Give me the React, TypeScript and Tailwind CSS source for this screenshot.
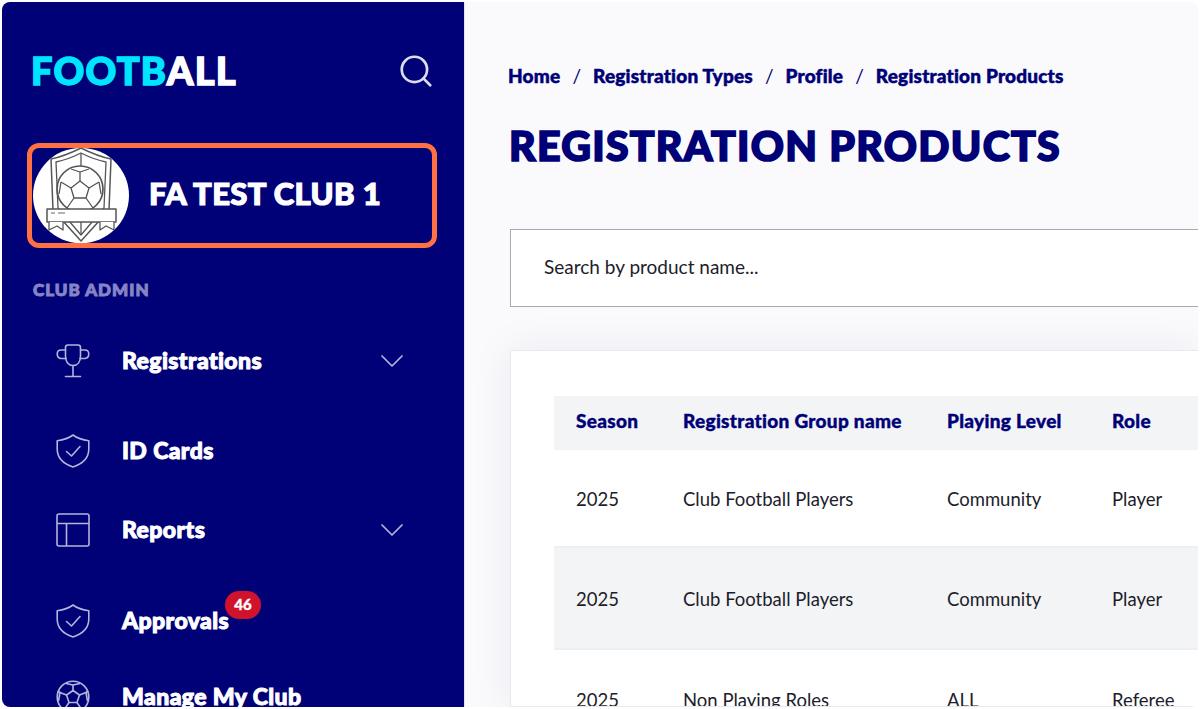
import { ChevronDown, Search } from "lucide-react";
import type { ReactNode } from "react";

function TableIcon() {
  return (
    <svg viewBox="0 0 34 34" className="size-[34px]" fill="none" stroke="#b4b4dc" strokeWidth="1.6">
      <rect x="1" y="1" width="32" height="32" rx="2" />
      <path d="M1 10.5h32M10.5 10.5V33" />
    </svg>
  );
}

function ShieldIcon() {
  return (
    <svg viewBox="0 0 34 34" className="size-[34px]" fill="none" stroke="#b4b4dc" strokeWidth="1.6" strokeLinejoin="round" strokeLinecap="round">
      <path d="M17 1 C21 4 27 6 32.8 6.8 V15 C32.8 24 26 30 17 33 C8 30 1.2 24 1.2 15 V6.8 C7 6 13 4 17 1 Z" />
      <path d="M10.5 17.5 L15.5 22 L24 12.5" />
    </svg>
  );
}

function TrophyIcon() {
  return (
    <svg viewBox="0 0 34 34" className="size-[34px]" fill="none" stroke="#b4b4dc" strokeWidth="1.6" strokeLinejoin="round" strokeLinecap="round">
      <path d="M9.5 3.5 C9.5 2 10.5 1 12 1 H22 C23.5 1 24.5 2 24.5 3.5 V12 C24.5 18 21.5 21.5 17 21.5 C12.5 21.5 9.5 18 9.5 12 Z" />
      <path d="M9.5 6 H5 C0 6 0 14 5 14.5 H10 M24.5 6 H29 C34 6 34 14 29 14.5 H24" />
      <path d="M17 21.5 V32.5 M9.5 32.5 H24.5" />
    </svg>
  );
}

function BallIcon() {
  return (
    <svg viewBox="0 0 34 34" className="size-[34px]" fill="none" stroke="#b4b4dc" strokeWidth="1.6" strokeLinejoin="round">
      <circle cx="17" cy="17" r="15.8" />
      <path d="M17 10.5 L23.5 15 L21 22.5 H13 L10.5 15 Z" />
      <path d="M17 10.5 V5 M23.5 15 L30 12.5 M21 22.5 L25 28.5 M13 22.5 L9 28.5 M10.5 15 L4 12.5" />
      <path d="M10 3.5 L17 5 L24 3.5 M32 11 L30 12.5 L31.5 21 M2 11 L4 12.5 L2.5 21 M9 28.5 L12 32 M25 28.5 L22 32" />
    </svg>
  );
}

function Crest() {
  return (
    <div className="w-24 h-[95px] rounded-full bg-white overflow-hidden shrink-0">
      <svg viewBox="0 0 96 96" className="size-24" fill="none" stroke="#555" strokeWidth="1.3" strokeLinejoin="round">
        <path d="M48 0 C56 4 64 8 78 11 L76 62 L48 93 L20 62 L18 11 C32 8 40 4 48 0 Z" strokeWidth="1.5" />
        <path d="M48 5 C56 9 63 12 73 14 L71 60 L48 87 L25 60 L23 14 C33 12 40 9 48 5 Z" />
        <path d="M48 5 V20 M48 74 V87" />
        <circle cx="47" cy="41" r="23" fill="#fff" strokeWidth="1.7" />
        <path d="M47 33 L56 40 L53 50 H41 L38 40 Z" />
        <path d="M47 33 V24 M56 40 L66 34 M53 50 L60 60 M41 50 L34 60 M38 40 L28 34" />
        <path d="M38 21 L47 24 L56 21 M66 34 L68 46 M28 34 L26 46 M34 60 L41 64 M60 60 L53 64" />
        <path d="M14 61 H83 V74 H14 Z" fill="#fff" strokeWidth="1.5" />
        <path d="M16 74 V82 L24 78 L30 82 V74 M81 74 V82 L73 78 L67 82 V74" fill="#fff" />
        <path d="M18 65 H22 M25 65 H32" strokeWidth="0.9" />
      </svg>
    </div>
  );
}

function NavItem({ icon, label, chevron, badge, className }: { icon: ReactNode; label: string; chevron?: boolean; badge?: string; className: string }) {
  return (
    <div className={`flex items-center pl-[54px] pr-[52px] ${className}`}>
      <span className="w-[66px] shrink-0 flex">{icon}</span>
      <span className="relative mb-[2px] font-black text-[23px] tracking-[0.4px] leading-none text-white [-webkit-text-stroke:1px_currentColor]">
        {label}
        {badge && (
          <span className="absolute -top-[18px] -right-[32px] h-[28px] w-[36px] rounded-full bg-[#d0122d] text-white text-[15px] tracking-normal [-webkit-text-stroke:0.3px_currentColor] flex items-center justify-center">
            {badge}
          </span>
        )}
      </span>
      {chevron && <ChevronDown className="ml-auto text-[#b4b4dc] shrink-0" size={40} strokeWidth={1.05} />}
    </div>
  );
}

function Row({ name, level, role, className }: { name: string; level: string; role: string; className: string }) {
  return (
    <div className={`flex items-center shrink-0 text-[18.5px] text-[#1d1d2b] ${className}`}>
      <span className="w-[129px] pl-[22px]">2025</span>
      <span className="w-[264px]">{name}</span>
      <span className="w-[165px]">{level}</span>
      <span>{role}</span>
    </div>
  );
}

function Crumb({ children }: { children: string }) {
  return <span className="font-black tracking-[0.2px] [-webkit-text-stroke:0.5px_currentColor]">{children}</span>;
}

export default function App() {
  return (
    <div className="h-[709px] w-[1200px] bg-white p-[2px] overflow-hidden font-['Lato',sans-serif]">
      <div className="flex h-full w-full rounded-lg overflow-hidden bg-[#fafafc]">
        <aside className="w-[462px] h-full shrink-0 bg-[#000077] overflow-hidden flex flex-col pt-[46px] pl-[25px] pr-[26px]">
          <div className="flex items-center justify-between pl-[4px] pr-[3px] h-[46px] shrink-0">
            <span className="mb-[2px] font-black text-[38px] tracking-[1.2px] leading-none [-webkit-text-stroke:1.4px_currentColor]">
              <span className="text-[#00e5ff]">FOOTB</span>
              <span className="text-white">ALL</span>
            </span>
            <Search className="text-[#dcdcf0]" size={38} strokeWidth={1.7} />
          </div>
          <div className="mt-[49px] h-[105px] w-[410px] shrink-0 rounded-[12px] border-[5px] border-[#ff7043] pl-[1px] flex items-center">
            <Crest />
            <span className="ml-[20px] mb-[4px] font-black text-[31px] tracking-[0.4px] leading-none text-white [-webkit-text-stroke:1.2px_currentColor]">FA TEST CLUB 1</span>
          </div>
          <div className="mt-[33px] pl-[6px] font-black text-[17px] tracking-[1px] leading-none text-[#8585c4] [-webkit-text-stroke:1px_currentColor]">CLUB ADMIN</div>
          <div className="-ml-[25px] -mr-[26px] flex flex-col">
            <NavItem icon={<TrophyIcon />} label="Registrations" chevron className="mt-[46px] h-[34px] shrink-0" />
            <NavItem icon={<ShieldIcon />} label="ID Cards" className="mt-[56px] h-[34px] shrink-0" />
            <NavItem icon={<TableIcon />} label="Reports" chevron className="mt-[45px] h-[34px] shrink-0" />
            <NavItem icon={<ShieldIcon />} label="Approvals" badge="46" className="mt-[57px] h-[34px] shrink-0" />
            <NavItem icon={<BallIcon />} label="Manage My Club" className="mt-[42px] h-[34px] shrink-0" />
          </div>
        </aside>
        <main className="flex-1 min-w-0 h-full overflow-hidden border-l border-[#e4e4f0] pl-[45px] flex flex-col">
          <div className="pt-[63px] h-[84px] shrink-0 -ml-[2px] flex gap-[12px] text-[19px] leading-[22px] text-[#000077]">
            <Crumb>Home</Crumb>
            <span>/</span>
            <Crumb>Registration Types</Crumb>
            <span>/</span>
            <Crumb>Profile</Crumb>
            <span>/</span>
            <Crumb>Registration Products</Crumb>
          </div>
          <h1 className="mt-[34px] h-[52px] shrink-0 -ml-[1px] font-black text-[41px] tracking-[1.3px] leading-[52px] text-[#000077] [-webkit-text-stroke:1.7px_currentColor]">REGISTRATION PRODUCTS</h1>
          <div className="mt-[57px] h-[78px] shrink-0 bg-white border border-[#a9a9b3] border-r-0 flex items-center pl-[33px] pb-[2px] text-[19px] text-[#1d1d2b]">
            Search by product name...
          </div>
          <div className="mt-[43px] flex-1 min-h-0 bg-white border border-[#e8e9ef] border-r-0 pl-[43px] pt-[45px] shadow-[0_0_40px_rgba(0,0,119,0.07)] flex flex-col overflow-hidden">
            <div className="flex items-center h-[54px] pb-[4px] shrink-0 bg-[#f3f4f6] text-[19px] tracking-[0.3px] font-black text-[#000077] [-webkit-text-stroke:0.4px_currentColor]">
              <span className="w-[129px] pl-[22px]">Season</span>
              <span className="w-[264px]">Registration Group name</span>
              <span className="w-[165px]">Playing Level</span>
              <span>Role</span>
            </div>
            <Row name="Club Football Players" level="Community" role="Player" className="h-[98px] pt-[3px] border-b-2 border-[#eceef2]" />
            <Row name="Club Football Players" level="Community" role="Player" className="h-[102px] pt-[3px] bg-[#f3f4f6] border-b-2 border-[#eceef2]" />
            <Row name="Non Playing Roles" level="ALL" role="Referee" className="h-[100px] pt-[2px]" />
          </div>
        </main>
      </div>
    </div>
  );
}
